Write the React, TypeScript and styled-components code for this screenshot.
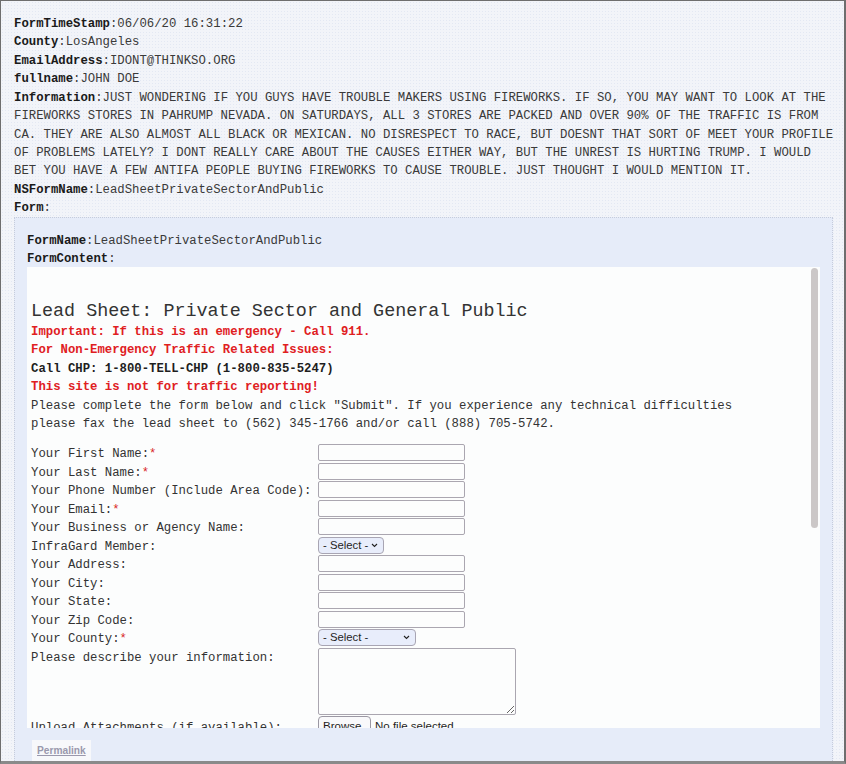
import React from "react";
import styled, { createGlobalStyle } from "styled-components";

const Global = createGlobalStyle`
  html, body { margin: 0; padding: 0; background: #ffffff; }
  * { box-sizing: border-box; }
`;

const mono = `"Liberation Mono", "Courier New", monospace`;
const sans = `"Liberation Sans", Arial, sans-serif`;

const Frame = styled.div`
  width: 846px;
  height: 764px;
  overflow: hidden;
  border: 1px solid #6e6e6e;
  border-right-width: 2px;
  border-bottom: 3px solid #8a8a8a;
  background-color: #f2f4f9;
  background-image: radial-gradient(#e3e8f3 0.6px, transparent 0.8px);
  background-size: 3px 3px;
  padding: 13.8px 5px 0 13px;
  font-family: ${mono};
  font-size: 12.3px;
  line-height: 18.45px;
  color: #3a3a3a;
`;

const Field = styled.div`
  margin: 0;
`;

const Key = styled.span`
  font-weight: bold;
  color: #1a1a1a;
`;

const FormBox = styled.div`
  margin-top: -0.7px;
  margin-right: 6px;
  background: #e6ecf9;
  border: 1px dotted #c6ccdb;
  padding: 13.8px 12px 0 12px;
  height: 560px;
`;

const ContentFrame = styled.div`
  position: relative;
  margin-top: -2px;
  height: 461px;
  overflow: hidden;
  background: #fcfdfd;
  padding: 34px 0 0 4px;
  color: #333333;
`;

const Title = styled.div`
  font-size: 18.4px;
  line-height: 22px;
  color: #333333;
`;

const Notice = styled.div<{ $tone?: "red" | "dark" | "plain" }>`
  font-weight: ${(p) => (p.$tone === "plain" ? "normal" : "bold")};
  color: ${(p) =>
    p.$tone === "red" ? "#e0201f" : p.$tone === "dark" ? "#1e1e1e" : "#333333"};
`;

const FieldGrid = styled.div`
  margin-top: 10.5px;
  display: grid;
  grid-template-columns: 287px auto;
  row-gap: 1.5px;
  align-items: start;
`;

const Label = styled.div<{ $tall?: boolean }>`
  height: ${(p) => (p.$tall ? 20 : 17)}px;
  line-height: ${(p) => (p.$tall ? 24 : 21)}px;
  white-space: nowrap;
`;

const Req = styled.span`
  color: #d82424;
`;

const TextInput = styled.input`
  display: block;
  width: 147px;
  height: 17px;
  margin: 0;
  padding: 0 3px;
  border: 1px solid #aaa6b0;
  border-radius: 2px;
  background: #fcfdfd;
  outline: none;
`;

const SelectBox = styled.div<{ $w: number }>`
  width: ${(p) => p.$w}px;
  height: 17px;
  display: flex;
  align-items: center;
  justify-content: space-between;
  padding: 0 5px 0 4px;
  border: 1px solid #a8a5b3;
  border-radius: 4px;
  background: #e8edfb;
  font-family: ${sans};
  font-size: 11.3px;
  color: #1f1f1f;
`;

const Chevron = () => (
  <svg width="7" height="5" viewBox="0 0 7 5" aria-hidden="true">
    <path d="M1 1l2.5 2.5L6 1" fill="none" stroke="#222" strokeWidth="1.1" />
  </svg>
);

const TextArea = styled.textarea`
  display: block;
  width: 198px;
  height: 67px;
  margin: 0;
  border: 1px solid #aaa6b0;
  border-radius: 2px;
  background: #fcfdfd;
  outline: none;
`;

const FileRow = styled.div`
  display: flex;
  align-items: center;
  gap: 4px;
  font-family: ${sans};
  font-size: 11.5px;
  color: #1f1f1f;
`;

const BrowseButton = styled.button`
  width: 53px;
  height: 20px;
  margin: 0;
  padding: 0 4px;
  border: 1px solid #9b98a3;
  border-radius: 4px;
  background: #f9f9fb;
  font-family: ${sans};
  font-size: 11.5px;
  color: #1f1f1f;
  text-align: left;
`;

const Scrollbar = styled.div`
  position: absolute;
  top: 1px;
  right: 2px;
  width: 7px;
  height: 260px;
  border-radius: 4px;
  background: #cbc7c7;
`;

const Permalink = styled.a`
  display: inline-block;
  margin: 12px 0 0 5px;
  padding: 4px 5px 6px 5px;
  background: #f7f8fb;
  font-family: ${sans};
  font-size: 10.2px;
  line-height: 13px;
  font-weight: bold;
  color: #9a98ad;
  text-decoration: underline;
`;

type Row =
  | { kind: "text"; label: string; req?: boolean }
  | { kind: "select"; label: string; req?: boolean; w: number };

const rows: Row[] = [
  { kind: "text", label: "Your First Name:", req: true },
  { kind: "text", label: "Your Last Name:", req: true },
  { kind: "text", label: "Your Phone Number (Include Area Code):" },
  { kind: "text", label: "Your Email:", req: true },
  { kind: "text", label: "Your Business or Agency Name:" },
  { kind: "select", label: "InfraGard Member:", w: 66 },
  { kind: "text", label: "Your Address:" },
  { kind: "text", label: "Your City:" },
  { kind: "text", label: "Your State:" },
  { kind: "text", label: "Your Zip Code:" },
  { kind: "select", label: "Your County:", req: true, w: 98 },
];

const info =
  "JUST WONDERING IF YOU GUYS HAVE TROUBLE MAKERS USING FIREWORKS. IF SO, YOU MAY WANT TO LOOK AT THE FIREWORKS STORES IN PAHRUMP NEVADA. ON SATURDAYS, ALL 3 STORES ARE PACKED AND OVER 90% OF THE TRAFFIC IS FROM CA. THEY ARE ALSO ALMOST ALL BLACK OR MEXICAN. NO DISRESPECT TO RACE, BUT DOESNT THAT SORT OF MEET YOUR PROFILE OF PROBLEMS LATELY? I DONT REALLY CARE ABOUT THE CAUSES EITHER WAY, BUT THE UNREST IS HURTING TRUMP. I WOULD BET YOU HAVE A FEW ANTIFA PEOPLE BUYING FIREWORKS TO CAUSE TROUBLE. JUST THOUGHT I WOULD MENTION IT.";

export default function App() {
  return (
    <>
      <Global />
      <Frame>
        <Field><Key>FormTimeStamp</Key>:06/06/20 16:31:22</Field>
        <Field><Key>County</Key>:LosAngeles</Field>
        <Field><Key>EmailAddress</Key>:IDONT@THINKSO.ORG</Field>
        <Field><Key>fullname</Key>:JOHN DOE</Field>
        <Field><Key>Information</Key>:{info}</Field>
        <Field><Key>NSFormName</Key>:LeadSheetPrivateSectorAndPublic</Field>
        <Field><Key>Form</Key>:</Field>
        <FormBox>
          <Field><Key>FormName</Key>:LeadSheetPrivateSectorAndPublic</Field>
          <Field><Key>FormContent</Key>:</Field>
          <ContentFrame>
            <Title>Lead Sheet: Private Sector and General Public</Title>
            <Notice $tone="red">Important: If this is an emergency - Call 911.</Notice>
            <Notice $tone="red">For Non-Emergency Traffic Related Issues:</Notice>
            <Notice $tone="dark">Call CHP: 1-800-TELL-CHP (1-800-835-5247)</Notice>
            <Notice $tone="red">This site is not for traffic reporting!</Notice>
            <Notice $tone="plain">
              Please complete the form below and click "Submit". If you experience any technical difficulties
            </Notice>
            <Notice $tone="plain">
              please fax the lead sheet to (562) 345-1766 and/or call (888) 705-5742.
            </Notice>
            <FieldGrid>
              {rows.map((r) => (
                <React.Fragment key={r.label}>
                  <Label>
                    {r.label}
                    {r.req && <Req>*</Req>}
                  </Label>
                  {r.kind === "text" ? (
                    <TextInput type="text" />
                  ) : (
                    <SelectBox $w={r.w}>
                      <span>- Select -</span>
                      <Chevron />
                    </SelectBox>
                  )}
                </React.Fragment>
              ))}
              <Label>Please describe your information:</Label>
              <TextArea />
              <Label $tall>Upload Attachments (if available):</Label>
              <FileRow>
                <BrowseButton type="button">Browse</BrowseButton>
                <span>No file selected</span>
              </FileRow>
            </FieldGrid>
            <Scrollbar />
          </ContentFrame>
          <Permalink>Permalink</Permalink>
        </FormBox>
      </Frame>
    </>
  );
}
